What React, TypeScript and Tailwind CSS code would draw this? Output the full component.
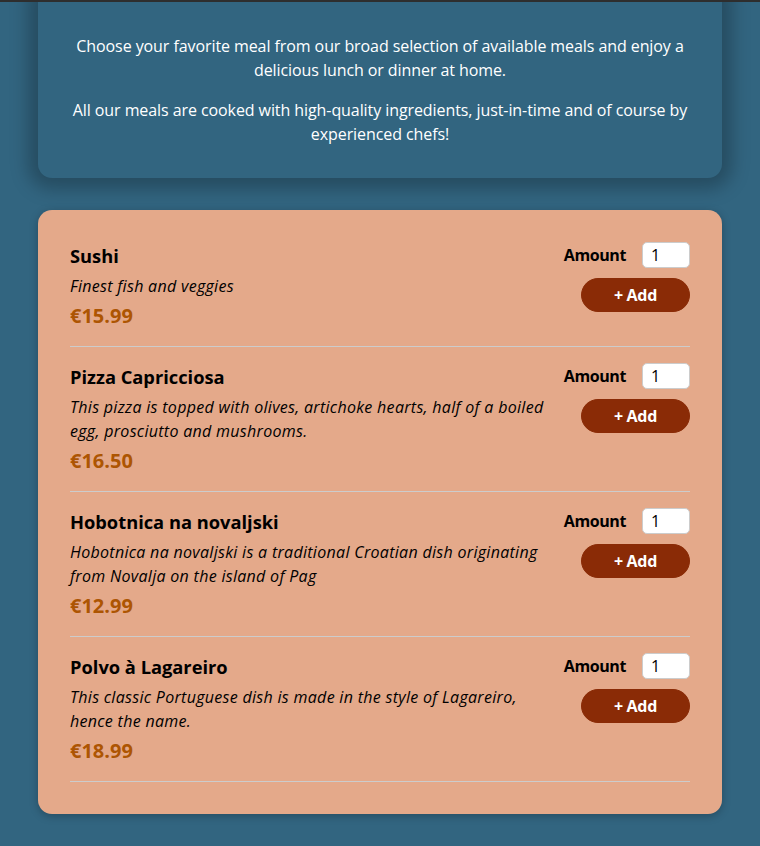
import React from "react";

const meals = [
  { name: "Sushi", desc: "Finest fish and veggies", price: "€15.99" },
  {
    name: "Pizza Capricciosa",
    desc: "This pizza is topped with olives, artichoke hearts, half of a boiled egg, prosciutto and mushrooms.",
    price: "€16.50",
  },
  {
    name: "Hobotnica na novaljski",
    desc: "Hobotnica na novaljski is a traditional Croatian dish originating from Novalja on the island of Pag",
    price: "€12.99",
  },
  {
    name: "Polvo à Lagareiro",
    desc: "This classic Portuguese dish is made in the style of Lagareiro, hence the name.",
    price: "€18.99",
  },
];

export default function App() {
  return (
    <div
      className="min-h-[846px] overflow-hidden bg-[#326580]"
      style={{ fontFamily: "'Open Sans', 'Noto Sans', sans-serif" }}
    >
      <div className="relative z-10 h-[2px] bg-[#2e2e2e]" />
      <section className="relative mx-auto mt-[-16px] w-[90%] max-w-[45rem] rounded-[14px] bg-[#326580] px-4 pt-12 pb-8 text-center text-base leading-6 tracking-[-0.08px] text-white shadow-[0_1px_18px_10px_rgba(0,0,0,0.25)]">
        <p className="mb-4">
          Choose your favorite meal from our broad selection of available meals and enjoy a delicious lunch or
          dinner at home.
        </p>
        <p>
          All our meals are cooked with high-quality ingredients, just-in-time and of course by experienced chefs!
        </p>
      </section>
      <section className="mx-auto mt-8 w-[90%] max-w-[60rem] rounded-[14px] bg-[#e4a98a] px-8 py-8 text-black shadow-[0_2px_8px_rgba(0,0,0,0.25)]">
        <ul className="flex flex-col gap-4">
          {meals.map((m) => (
            <li key={m.name} className="flex justify-between border-b border-[#cccccc] pb-4">
              <div className="min-w-0">
                <h3 className="mb-1 text-[18.3px] font-bold leading-7">{m.name}</h3>
                <div className="text-base italic leading-6 tracking-[0.3px]">{m.desc}</div>
                <div className="mt-1 text-xl font-bold leading-7 text-[#ad5502]">{m.price}</div>
              </div>
              <form className="shrink-0 text-right" onSubmit={(e) => e.preventDefault()}>
                <div className="flex items-center justify-end">
                  <label className="mr-4 text-base font-bold leading-6 tracking-[-0.4px]">Amount</label>
                  <input
                    type="number"
                    defaultValue={1}
                    className="h-[26px] w-12 rounded-[5px] border border-[#cccccc] bg-white pl-2 text-base leading-6"
                    style={{ fontFamily: "inherit" }}
                  />
                </div>
                <button
                  type="submit"
                  className="mt-[10px] rounded-[20px] border border-[#8a2b06] bg-[#8a2b06] px-8 py-1 text-base font-bold leading-6 tracking-[-0.3px] text-white"
                >
                  + Add
                </button>
              </form>
            </li>
          ))}
        </ul>
      </section>
    </div>
  );
}
